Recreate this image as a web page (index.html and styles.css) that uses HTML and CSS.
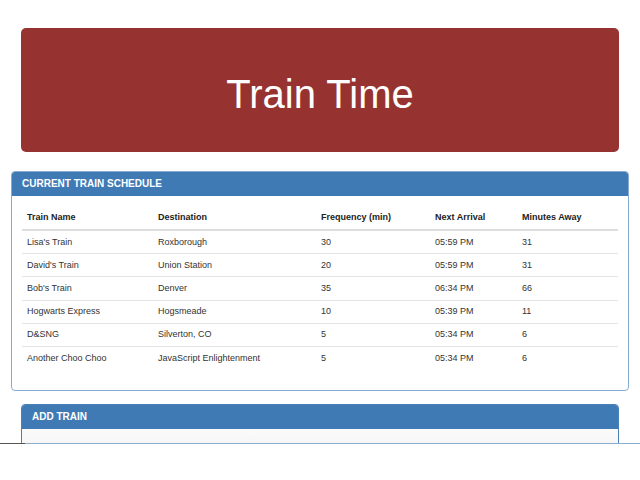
FILE: index.html
```html
<!DOCTYPE html>
<html>
<head>
<meta charset="utf-8">
<title>Train Time</title>
<link rel="stylesheet" href="styles.css">
</head>
<body>
<div class="page">
  <header class="jumbotron">
    <h1 class="jumbo-title">Train Time</h1>
  </header>

  <section class="panel panel-wide">
    <div class="panel-heading">
      <h3 class="panel-title">CURRENT TRAIN SCHEDULE</h3>
    </div>
    <div class="panel-body">
      <table class="schedule">
        <colgroup>
          <col class="c1"><col class="c2"><col class="c3"><col class="c4"><col class="c5">
        </colgroup>
        <thead>
          <tr>
            <th>Train Name</th>
            <th>Destination</th>
            <th>Frequency (min)</th>
            <th>Next Arrival</th>
            <th>Minutes Away</th>
          </tr>
        </thead>
        <tbody>
          <tr><td>Lisa's Train</td><td>Roxborough</td><td>30</td><td>05:59 PM</td><td>31</td></tr>
          <tr><td>David's Train</td><td>Union Station</td><td>20</td><td>05:59 PM</td><td>31</td></tr>
          <tr><td>Bob's Train</td><td>Denver</td><td>35</td><td>06:34 PM</td><td>66</td></tr>
          <tr><td>Hogwarts Express</td><td>Hogsmeade</td><td>10</td><td>05:39 PM</td><td>11</td></tr>
          <tr><td>D&amp;SNG</td><td>Silverton, CO</td><td>5</td><td>05:34 PM</td><td>6</td></tr>
          <tr><td>Another Choo Choo</td><td>JavaScript Enlightenment</td><td>5</td><td>05:34 PM</td><td>6</td></tr>
        </tbody>
      </table>
    </div>
  </section>

  <section class="panel panel-narrow">
    <div class="panel-heading">
      <h3 class="panel-title">ADD TRAIN</h3>
    </div>
    <div class="panel-body form-body">
      <label class="form-label">Train Name</label>
    </div>
  </section>
</div>
<div class="bottom-cover"><span class="cover-dark"></span></div>
</body>
</html>
```

FILE: styles.css
```css
* { box-sizing: border-box; }

html, body {
  margin: 0;
  padding: 0;
  background: #ffffff;
  font-family: "Liberation Sans", Arial, Helvetica, sans-serif;
  color: #333333;
}

.page {
  padding-top: 28px;
  display: flex;
  flex-direction: column;
}

.jumbotron {
  margin: 0 21px;
  height: 124px;
  background: #963331;
  border-radius: 5px;
  display: flex;
  align-items: center;
  justify-content: center;
}

.jumbo-title {
  margin: 0;
  padding-top: 8px;
  font-size: 40px;
  font-weight: normal;
  line-height: 44px;
  color: #ffffff;
}

.panel {
  border: 1px solid #87acd2;
  border-radius: 4px;
  background: #ffffff;
  overflow: hidden;
}

.panel-wide {
  margin: 19px 11px 0 11px;
}

.panel-narrow {
  margin: 13px 21px 0 21px;
  border-color: #4a80b8;
}

.panel-heading {
  background: #3f7ab4;
  padding: 5px 10px;
}

.panel-title {
  margin: 0;
  font-size: 10px;
  line-height: 14px;
  font-weight: bold;
  color: #ffffff;
}

.panel-body {
  padding: 11px 10px 10px 10px;
}

.schedule {
  width: 100%;
  border-collapse: collapse;
  margin-bottom: 11px;
  font-size: 9px;
  line-height: 13px;
  color: #333333;
}

.c1 { width: 131px; }
.c2 { width: 163px; }
.c3 { width: 114px; }
.c4 { width: 87px; }
.c5 { width: auto; }

.schedule th {
  text-align: left;
  font-weight: bold;
  padding: 4px 5px 5px 5px;
  border-bottom: 2px solid #dddddd;
  color: #222222;
}

.schedule td {
  padding: 4.7px 5px 4.5px 5px;
  color: #333333;
}

.schedule tbody tr + tr td {
  border-top: 1px solid #e4e4e4;
}

.form-body {
  height: 40px;
  background: linear-gradient(#fbfbfb, #eeeeee);
}

.form-label {
  display: block;
  font-size: 9px;
  font-weight: bold;
  line-height: 13px;
  padding-top: 3px;
  color: #333333;
}

.bottom-cover {
  position: fixed;
  left: 0;
  right: 0;
  top: 443px;
  bottom: 0;
  background: #ffffff;
  border-top: 1px solid #8aaccd;
}

.cover-dark {
  position: absolute;
  left: 0;
  top: -1px;
  width: 25px;
  height: 1px;
  background: #555555;
}
```
